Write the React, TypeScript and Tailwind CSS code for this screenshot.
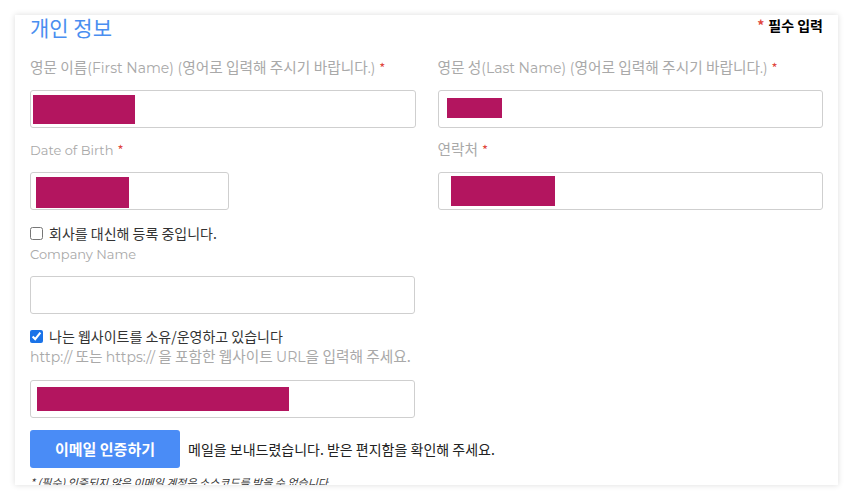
import React from "react";

const LABEL_FONT = "font-['Noto_Sans_CJK_KR','Noto_Sans',sans-serif]";
const BODY_FONT = "font-['Noto_Sans_CJK_KR','Noto_Sans',sans-serif]";

function Req() {
  return <span className="ml-1 text-[13px] text-[#e0463c]">*</span>;
}

// latin runs in the labels use a wider face
function L({ children, small }: { children: React.ReactNode; small?: boolean }) {
  return (
    <span className={`font-['Montserrat','Open_Sans',sans-serif] ${small ? "text-[13px]" : "text-[14px]"}`}>
      {children}
    </span>
  );
}

function Label({ children, required }: { children: React.ReactNode; required?: boolean }) {
  return (
    <div className={`h-5 leading-5 text-[14.7px] text-[#a9a9a9] whitespace-nowrap ${LABEL_FONT}`}>
      {children}
      {required && <Req />}
    </div>
  );
}

// redacted value inside a text field
function Field({ className = "", block }: { className?: string; block?: string }) {
  return (
    <div className={`h-[38px] rounded-[3px] border border-[#cfcfcf] bg-white ${className}`}>
      {block && <div className={`bg-[#b3155f] ${block}`} />}
    </div>
  );
}

export default function App() {
  return (
    <div className="min-h-[500px] w-[853px] bg-white px-[15px] pt-[15px]">
      <div className="h-[470px] overflow-hidden bg-white px-[15px] shadow-[0_0_6px_rgba(0,0,0,0.14)]">
        {/* Header */}
        <div className="flex h-6 items-center justify-between">
          <h2 className={`text-[21px] leading-6 text-[#4a8ef0] ${BODY_FONT}`}>개인 정보</h2>
          <span className={`-mt-1 text-[14px] font-bold text-black ${BODY_FONT}`}>
            <span className="mr-1 text-[#e0463c]">*</span>필수 입력
          </span>
        </div>

        {/* Name / birth / phone */}
        <div className="mt-[18px] grid grid-cols-2 gap-x-[22px]">
          <div>
            <Label required>
              영문 이름<L>(First Name) (</L>영어로 입력해 주시기 바랍니다<L>.)</L>
            </Label>
            <Field className="mt-[13px]" block="ml-[2px] mt-[4px] h-[29px] w-[102px]" />
          </div>
          <div>
            <Label required>
              영문 성<L>(Last Name) (</L>영어로 입력해 주시기 바랍니다<L>.)</L>
            </Label>
            <Field className="mt-[13px]" block="ml-[8px] mt-[7px] h-[20px] w-[55px]" />
          </div>
          <div className="mt-[11px]">
            <Label required>
              <L small>Date of Birth</L>
            </Label>
            <Field className="mt-[13px] w-[199px]" block="ml-[5px] mt-[4px] h-[31px] w-[93px]" />
          </div>
          <div className="mt-[11px]">
            <Label required>연락처</Label>
            <Field className="mt-[13px]" block="ml-[12px] mt-[3px] h-[30px] w-[104px]" />
          </div>
        </div>

        {/* Company */}
        <div className="w-[385px]">
          <label className={`mt-[13px] flex h-5 items-center gap-[6px] text-[14px] text-[#333] ${BODY_FONT}`}>
            <input type="checkbox" className="m-0 h-[13px] w-[13px]" />
            회사를 대신해 등록 중입니다.
          </label>
          <Label>
            <L small>Company Name</L>
          </Label>
          <Field className="mt-[13px]" />

          {/* Website */}
          <label className={`mt-[12px] flex h-5 items-center gap-[6px] text-[14px] text-[#333] ${BODY_FONT}`}>
            <input type="checkbox" defaultChecked className="m-0 h-[13px] w-[13px] accent-[#1a73e8]" />
            나는 웹사이트를 소유/운영하고 있습니다
          </label>
          <Label>
            <L>http://</L> 또는 <L>https://</L> 을 포함한 웹사이트 <L>URL</L>을 입력해 주세요.
          </Label>
          <Field className="mt-[14px]" block="ml-[6px] mt-[6px] h-[24px] w-[252px]" />
        </div>

        {/* Email verify */}
        <div className="mt-[12px] flex items-center gap-2">
          <button
            className={`h-[38px] w-[150px] rounded-[3px] bg-[#4a8cf6] text-[15px] font-bold text-white ${BODY_FONT}`}
          >
            이메일 인증하기
          </button>
          <span className={`text-[14px] text-[#222] ${BODY_FONT}`}>
            메일을 보내드렸습니다. 받은 편지함을 확인해 주세요.
          </span>
        </div>
        <p className={`mt-[6px] text-[11px] italic leading-4 text-[#333] ${BODY_FONT}`}>
          * (필수) 인증되지 않은 이메일 계정은 소스코드를 받을 수 없습니다
        </p>
      </div>
    </div>
  );
}
